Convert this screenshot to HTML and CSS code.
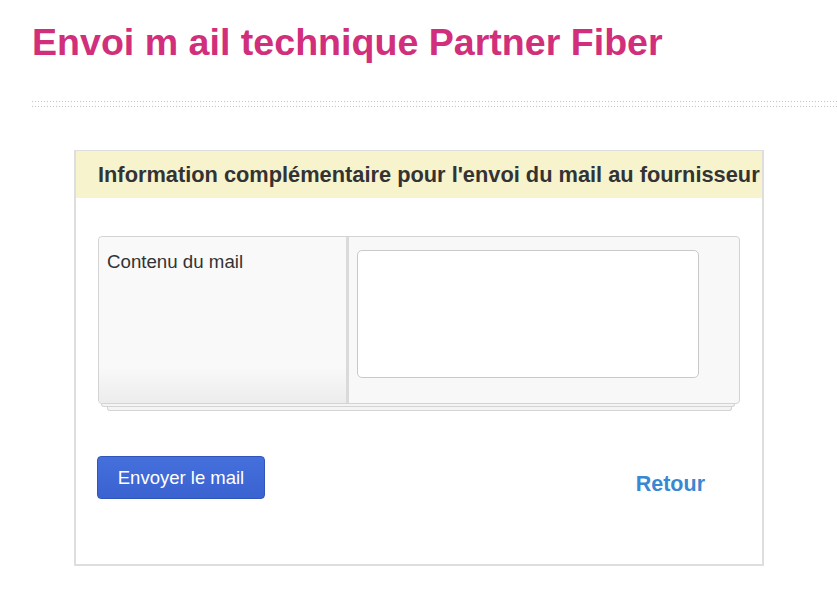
FILE: index.html
```html
<!DOCTYPE html>
<html lang="fr">
<head>
<meta charset="utf-8">
<title>Envoi mail technique Partner Fiber</title>
<link rel="stylesheet" href="styles.css">
</head>
<body>
<h1 class="page-title">Envoi m ail technique Partner Fiber</h1>
<div class="dots"></div>
<div class="card">
  <div class="card-head">Information complémentaire pour l'envoi du mail au fournisseur</div>
  <div class="card-body">
    <div class="form-table">
      <div class="label-cell">Contenu du mail</div>
      <div class="field-cell"><textarea class="mail-text"></textarea></div>
    </div>
    <div class="layer layer-1"></div>
    <div class="layer layer-2"></div>
    <div class="actions">
      <button class="send-btn" type="button">Envoyer le mail</button>
      <a class="back-link" href="#">Retour</a>
    </div>
  </div>
</div>
</body>
</html>
```

FILE: styles.css
```css
html, body {
  margin: 0;
  padding: 0;
  background: #fff;
}
body {
  font-family: "Liberation Sans", Arial, sans-serif;
  color: #333;
}
.page-title {
  margin: 21px 0 0 32px;
  font-size: 37.6px;
  line-height: 42px;
  font-weight: bold;
  color: #d12f7b;
}
.dots {
  margin: 38px 0 0 32px;
  height: 6px;
  background-image:
    linear-gradient(to right, #c4c4c4 1px, transparent 1px),
    linear-gradient(to right, #c4c4c4 1px, transparent 1px);
  background-size: 3px 1px, 3px 1px;
  background-position: 0 0, 0 5px;
  background-repeat: repeat-x, repeat-x;
}
.card {
  margin: 43px 0 0 74px;
  width: 686px;
  border: 2px solid #dedede;
  border-top-width: 1px;
  background: #fff;
}
.card-head {
  height: 47px;
  line-height: 47px;
  padding-left: 22px;
  background: #f6f3cd;
  font-size: 21.8px;
  font-weight: bold;
  color: #333;
  white-space: nowrap;
  overflow: hidden;
}
.card-body {
  padding: 38px 22px 65px 22px;
}
.form-table {
  display: flex;
  border: 1px solid #d3d3d3;
  border-radius: 4px;
  background: #f8f8f8;
  height: 166px;
}
.label-cell {
  width: 250px;
  padding: 14px 0 0 8px;
  box-sizing: border-box;
  font-size: 18.7px;
  line-height: 22px;
  color: #333;
  border-right: 3px solid #dadada;
  background: linear-gradient(to bottom, #f9f9f9 0, #f9f9f9 130px, #ececec 166px);
  border-radius: 4px 0 0 4px;
}
.field-cell {
  flex: 1;
  padding: 13px 0 0 8px;
}
.mail-text {
  display: block;
  width: 342px;
  height: 128px;
  box-sizing: border-box;
  border: 1px solid #c9c9c9;
  border-radius: 5px;
  background: #fff;
  resize: none;
  margin: 0;
  padding: 4px;
  font-family: "Liberation Sans", Arial, sans-serif;
}
.layer {
  height: 3px;
  box-sizing: border-box;
  border: 1px solid #d3d3d3;
  border-top: none;
  background: #f4f4f4;
  border-radius: 0 0 3px 3px;
}
.layer-1 {
  margin: 0 5px 0 3px;
}
.layer-2 {
  margin: 0 8px 0 9px;
  height: 4px;
}
.actions {
  display: flex;
  justify-content: space-between;
  align-items: flex-start;
  margin-top: 45px;
  padding-right: 35px;
}
.send-btn {
  width: 168px;
  height: 43px;
  margin-left: -1px;
  border: 1px solid #2f56b8;
  border-radius: 4px;
  background: linear-gradient(to bottom, #4570dc, #3a62d0);
  color: #fff;
  font-family: "Liberation Sans", Arial, sans-serif;
  font-size: 18.5px;
  padding: 0;
}
.back-link {
  margin-top: 16px;
  font-size: 21.5px;
  line-height: 25px;
  font-weight: bold;
  color: #3a87d2;
  text-decoration: none;
}
```
